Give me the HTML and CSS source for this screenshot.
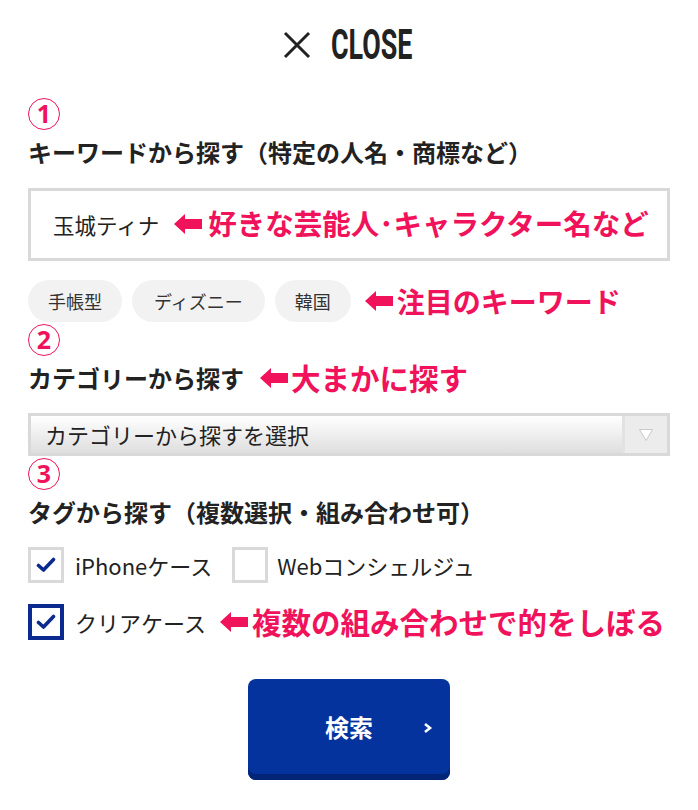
FILE: index.html
```html
<!DOCTYPE html>
<html lang="ja">
<head>
<meta charset="utf-8">
<title>検索</title>
<link rel="stylesheet" href="styles.css">
</head>
<body>
<div class="page">
  <div class="close">
    <svg class="close-x" width="28" height="28" viewBox="0 0 28 28"><path d="M2 2 L26 26 M26 2 L2 26" stroke="#222" stroke-width="3" fill="none"/></svg>
    <span class="close-label"><span class="close-text">CLOSE</span></span>
  </div>

  <div class="num">1</div>
  <h2 class="heading">キーワードから探す（特定の人名・商標など）</h2>
  <div class="input">
    <span class="input-value">玉城ティナ</span>
    <span class="note note-input"><svg class="arrow" width="28" height="20" viewBox="0 0 28 20"><polygon points="0,10 11,0 11,5 28,5 28,15 11,15 11,20" fill="#f0125a"/></svg><span>好きな芸能人･キャラクター名など</span></span>
  </div>
  <div class="tags">
    <span class="tag">手帳型</span>
    <span class="tag">ディズニー</span>
    <span class="tag">韓国</span>
    <span class="note note-tags"><svg class="arrow" width="28" height="20" viewBox="0 0 28 20"><polygon points="0,10 11,0 11,5 28,5 28,15 11,15 11,20" fill="#f0125a"/></svg><span>注目のキーワード</span></span>
  </div>

  <div class="num num-2">2</div>
  <div class="heading-row">
    <h2 class="heading">カテゴリーから探す</h2>
    <span class="note note-cat"><svg class="arrow" width="28" height="20" viewBox="0 0 28 20"><polygon points="0,10 11,0 11,5 28,5 28,15 11,15 11,20" fill="#f0125a"/></svg><span>大まかに探す</span></span>
  </div>
  <div class="select">
    <span class="select-text">カテゴリーから探すを選択</span>
    <span class="select-btn"><svg width="16" height="14" viewBox="0 0 16 14"><polygon points="1.5,1.5 14.5,1.5 8,12.5" fill="#fff" stroke="#c9c9c9" stroke-width="1"/></svg></span>
  </div>

  <div class="num num-3">3</div>
  <h2 class="heading">タグから探す（複数選択・組み合わせ可）</h2>
  <div class="checks">
    <div class="check-row">
      <label class="check"><span class="box"><svg width="20" height="16" viewBox="0 0 20 16"><path d="M2.5 8.5 L7.5 13 L17.5 2.5" stroke="#0b2a8f" stroke-width="3.6" fill="none" stroke-linecap="round" stroke-linejoin="round"/></svg></span><span class="check-label">iPhoneケース</span></label>
      <label class="check check-2"><span class="box"></span><span class="check-label">Webコンシェルジュ</span></label>
    </div>
    <div class="check-row row-2">
      <label class="check"><span class="box box-active"><svg width="20" height="16" viewBox="0 0 20 16"><path d="M2.5 8.5 L7.5 13 L17.5 2.5" stroke="#0b2a8f" stroke-width="3.6" fill="none" stroke-linecap="round" stroke-linejoin="round"/></svg></span><span class="check-label">クリアケース</span></label>
      <span class="note note-check"><svg class="arrow" width="28" height="20" viewBox="0 0 28 20"><polygon points="0,10 11,0 11,5 28,5 28,15 11,15 11,20" fill="#f0125a"/></svg><span>複数の組み合わせで的をしぼる</span></span>
    </div>
  </div>

  <div class="btn-wrap">
    <button class="search-btn"><span class="btn-text">検索</span><svg class="chev" width="10" height="12" viewBox="0 0 10 12"><path d="M2 2 L7 6 L2 10" stroke="#fff" stroke-width="2.6" fill="none"/></svg></button>
  </div>
</div>
</body>
</html>
```

FILE: styles.css
```css
* { box-sizing: border-box; }
html, body { margin: 0; padding: 0; background: #fff; }
body {
  font-family: "Noto Sans CJK JP", "Noto Sans", sans-serif;
  color: #222;
}
.page { width: 698px; padding: 0 28px; }

.close {
  height: 90px;
  display: flex;
  align-items: center;
  justify-content: center;
  gap: 20px;
  padding-right: 4px;
}
.close-x { display: block; }
.close-label {
  display: inline-block;
  width: 81px;
  height: 44px;
  overflow: visible;
  white-space: nowrap;
}
.close-text {
  display: inline-block;
  font-family: Roboto, "Liberation Sans", sans-serif;
  font-weight: 700;
  font-size: 42px;
  line-height: 44px;
  color: #222;
  transform: scaleX(0.64);
  transform-origin: left center;
}

.num {
  margin-top: 8px;
  width: 32px;
  height: 32px;
  border: 1.5px solid #f0125a;
  border-radius: 50%;
  color: #f0125a;
  font-weight: 700;
  font-size: 25px;
  line-height: 29px;
  text-align: center;
  font-family: "Noto Sans", "Noto Sans CJK JP", sans-serif;
}
.num-2, .num-3 { margin-top: 2px; }

.heading {
  margin: 6px 0 0;
  font-size: 24px;
  font-weight: 700;
  line-height: 32px;
  color: #222;
  white-space: nowrap;
}
.heading-row {
  display: flex;
  align-items: center;
  margin-top: 6px;
  height: 32px;
}
.heading-row .heading { margin: 0; }

.note {
  display: inline-flex;
  align-items: center;
  color: #f0125a;
  font-weight: 700;
  font-size: 28px;
  white-space: nowrap;
  line-height: 1;
}
.note .arrow { display: block; margin-right: 6px; flex: none; }

.input {
  margin-top: 20px;
  height: 73px;
  border: 3px solid #d9d9d9;
  display: flex;
  align-items: center;
  padding-left: 22px;
}
.input-value { font-size: 21.5px; color: #222; margin-right: 15px; }
.note-input { margin-top: -2px; font-size: 28.5px; }

.tags {
  margin-top: 19px;
  display: flex;
  align-items: center;
  gap: 10px;
  height: 42px;
}
.tag {
  height: 42px;
  padding: 0 20px;
  border-radius: 21px;
  background: #f2f2f2;
  font-size: 18px;
  line-height: 42px;
  color: #333;
}
.tag:nth-child(2) { padding: 0 22px; }
.note-tags { margin-left: 4px; }
.note-tags .arrow { margin-right: 4px; }

.note-cat { margin-left: 16px; font-size: 29.5px; }
.note-cat .arrow { margin-right: 3px; }

.select {
  margin-top: 19px;
  height: 43px;
  border: 3px solid #d9d9d9;
  display: flex;
  background: linear-gradient(#ffffff, #dedede);
}
.select-text {
  flex: 1;
  font-size: 22px;
  line-height: 37px;
  padding-left: 14px;
  color: #222;
  border-right: 3px solid #e2e2e2;
}
.select-btn {
  width: 42px;
  display: flex;
  align-items: center;
  justify-content: center;
  background: #ececec;
}

.checks { margin-top: 19px; }
.check-row { display: flex; align-items: center; height: 36px; }
.row-2 { margin-top: 21px; }
.check { display: inline-flex; align-items: center; }
.box {
  width: 36px;
  height: 36px;
  border: 3px solid #d9d9d9;
  background: #fff;
  display: flex;
  align-items: center;
  justify-content: center;
  flex: none;
}
.box-active { border: 4px solid #0b2a8f; }
.check-label {
  margin-left: 11px;
  font-size: 22px;
  color: #222;
  white-space: nowrap;
}
.check-label:first-of-type { letter-spacing: -0.2px; }
.check-2 { margin-left: 20px; }
.check-2 .check-label { margin-left: 9px; }
.note-check { margin-left: 14px; font-size: 29.5px; }
.note-check .arrow { margin-right: 4px; }

.btn-wrap {
  margin-top: 39px;
  display: flex;
  justify-content: center;
}
.search-btn {
  position: relative;
  width: 202px;
  height: 101px;
  border: none;
  border-radius: 8px;
  background: #04339e;
  box-shadow: inset 0 -6px 0 #022577;
  color: #fff;
  font-family: "Noto Sans CJK JP", sans-serif;
  font-weight: 700;
  font-size: 24px;
  padding: 0 0 6px;
  display: flex;
  align-items: center;
  justify-content: center;
  cursor: pointer;
}
.btn-text { line-height: 1; }
.chev { position: absolute; right: 17px; top: 43px; }
```
